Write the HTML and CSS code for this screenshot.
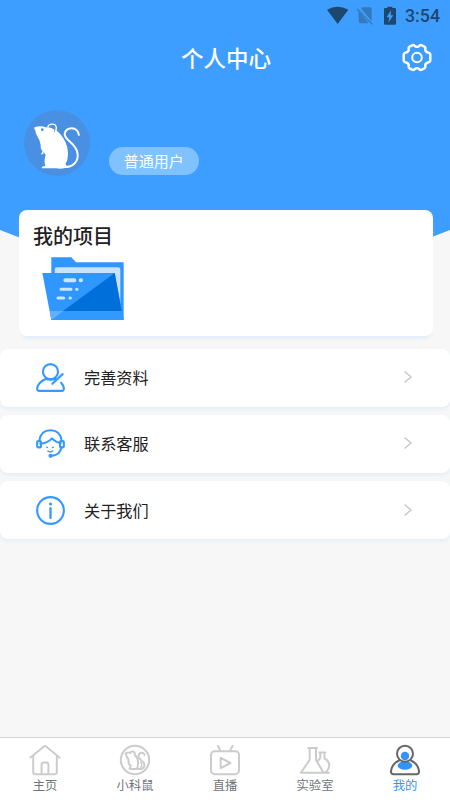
FILE: index.html
```html
<!DOCTYPE html>
<html lang="zh-CN">
<head>
<meta charset="utf-8">
<title>个人中心</title>
<link rel="stylesheet" href="styles.css">
</head>
<body>
<div class="app">
  <header class="hero">
    <div class="status">
      <svg width="108" height="20" viewBox="0 0 324 60">
        <path d="M3 11Q34-7 67 11L35 54Z" fill="#1e4770"/>
        <path d="M105 7L137 46V9Q137 4 132 4H111ZM98 15V45Q98 52 103 52H128Z" fill="#3279bd"/>
        <path d="M93 9L139 55" stroke="#3279bd" stroke-width="4"/>
        <path d="M176 6H184V2H199V6H207Q210 6 210 9V53Q210 56 207 56H177Q174 56 174 53V9Q174 6 177 6Z" fill="#1e4770"/>
        <path d="M195 13L182 34H190L187 50L202 28H194Z" fill="#3e9eff"/>
      </svg>
      <span class="clock">3:54</span>
    </div>
    <div class="titlebar">
      <h1>个人中心</h1>
      <svg class="gear" width="30" height="30" viewBox="0 0 30 30" fill="none" stroke="#fff" stroke-width="2.4" stroke-linejoin="round">
        <path d="M10.7 2.2C11.7 1.5 12.5 2.4 13.1 3.2Q15 4.5 16.9 3.2C17.5 2.4 18.3 1.5 19.3 2.2L22.5 3.7C23.8 4.3 23.4 5.5 23.2 6.4Q23.4 9 26 9.5C27.2 9.7 28.1 9.9 28.3 11.2V17.8C28.1 19.1 27.2 19.3 26 19.5Q23.4 20 23.2 22.6C23.4 23.6 23.8 24.7 22.5 25.3L19.3 26.8C18.3 27.5 17.5 26.6 16.9 25.8Q15 24.5 13.1 25.8C12.5 26.6 11.7 27.5 10.7 26.8L7.5 25.3C6.2 24.7 6.6 23.6 6.8 22.6Q6.6 20 4 19.5C2.8 19.3 1.9 19.1 1.7 17.8V11.2C1.9 9.9 2.8 9.7 4 9.5Q6.6 9 6.8 6.4C6.6 5.5 6.2 4.3 7.5 3.7Z"/>
        <circle cx="15" cy="14.5" r="4.8" stroke-width="2"/>
      </svg>
    </div>
    <div class="profile">
      <svg width="66" height="66" viewBox="27 30 198 198">
        <circle cx="126" cy="129" r="99" fill="#4a90e2"/>
        <path d="M58 82Q77 76 92 82Q116 82 133 99Q157 124 159 158Q159 182 151 191L158 202Q143 208 123 205H80Q80 198 91 198Q86 183 92 165L86 156Q86 165 78 163L83 153Q76 148 77 135Q76 121 66 107Q61 99 61 91Q57 89 58 82Z" fill="#fff"/>
        <path d="M98 82C101 70 121 69 124 81Q125 92 118 98" fill="none" stroke="#fff" stroke-width="4"/>
        <path d="M112 83Q123 88 118 97" fill="none" stroke="#4a90e2" stroke-width="2"/>
        <path d="M147 201C174 202 190 184 188 163C186 130 149 123 149 102C151 79 190 77 192 107" fill="none" stroke="#fff" stroke-width="6"/>
        <circle cx="82" cy="89" r="4" fill="#4a90e2"/>
      </svg>
      <span class="badge">普通用户</span>
    </div>
  </header>

  <main>
    <section class="projects">
      <h2>我的项目</h2>
      <svg width="82" height="64" viewBox="127 171 246 192">
        <path d="M155 172H215L229 187H372V360H155Z" fill="#2f97ff"/>
        <path d="M165 219V209Q165 202 172 202H354Q362 202 362 209V325L345 219Z" fill="#c8e2ff"/>
        <path d="M128 219H345L372 360H155Z" fill="#2f97ff"/>
        <path d="M345 219L366 333H190Z" fill="#006fda"/>
        <path d="M190 333H367L372 360H155Z" fill="#329aff"/>
        <path d="M150 333H191L155 360Z" fill="#62b0ff"/>
        <g stroke="#c8e8ff" stroke-linecap="round">
          <path d="M197 241H224M243 241H244" stroke-width="12"/>
          <path d="M184 268H214M231 268H232" stroke-width="9"/>
          <path d="M175 294H192M211 294H212" stroke-width="9"/>
        </g>
      </svg>
    </section>
    <nav class="menu">
      <a class="row">
        <svg class="icon" viewBox="0 0 30 30">
          <circle cx="15" cy="9" r="7.8"/>
          <path d="M10 16.5Q2 20 1.2 26Q1 28.9 3.5 28.9H26.5Q29 28.9 28.8 26Q28.3 23 26 20.5M10 16.5Q15 18 20 16.5M27.5 11.5L17 21.5"/>
        </svg>
        <span>完善资料</span>
        <svg class="chevron" viewBox="0 0 10 14"><path d="M1.5 1.5L8 7L1.5 12.5"/></svg>
      </a>
      <a class="row">
        <svg class="icon" viewBox="0 0 30 30">
          <path d="M3.5 12C4.5 5 9 1.3 15 1.3S25.5 5 26.5 12M4.5 15.2C9.5 15 13.5 13 16.5 9.7Q20 13.5 25.5 14.5M26.3 19C25.5 24.5 21 27.5 15.5 27.8"/>
          <rect x="1.2" y="12.5" width="4" height="6.5" rx="1.2"/>
          <rect x="24.8" y="12.5" width="4" height="6.5" rx="1.2"/>
          <path d="M12.3 22.8Q14.8 24.8 17.3 22.8" stroke-width="1.5"/>
          <g fill="#3699ff" stroke="none"><circle cx="11.5" cy="19" r="1"/><circle cx="17.5" cy="19" r="1"/><circle cx="15" cy="27.8" r="2.1"/></g>
        </svg>
        <span>联系客服</span>
        <svg class="chevron" viewBox="0 0 10 14"><path d="M1.5 1.5L8 7L1.5 12.5"/></svg>
      </a>
      <a class="row">
        <svg class="icon" viewBox="0 0 30 30">
          <circle cx="15" cy="15" r="13.8"/>
          <path d="M15 12.5V22.8" stroke-width="2.4"/>
          <circle cx="15" cy="8.3" r="1.6" fill="#3699ff" stroke="none"/>
        </svg>
        <span>关于我们</span>
        <svg class="chevron" viewBox="0 0 10 14"><path d="M1.5 1.5L8 7L1.5 12.5"/></svg>
      </a>
    </nav>
  </main>

  <footer class="tabs">
    <a class="tab">
      <svg viewBox="0 0 32 32"><path d="M1.5 13.5L15.2 2.3Q16 1.7 16.8 2.3L30.5 13.5M4.2 12V28Q4.2 30.2 6.5 30.2H25.5Q27.8 30.2 27.8 28V12M12.6 30V20.5Q12.6 18.6 14.4 18.6H17.6Q19.4 18.6 19.4 20.5V30"/></svg>
      <span>主页</span>
    </a>
    <a class="tab">
      <svg viewBox="0 0 32 32">
        <circle cx="16" cy="16" r="14.2"/>
        <path d="M6.5 9.5Q9 8 11.5 9C12 6.5 16.5 7 15.7 10.5Q19 14 19.2 19Q19.2 22 17.8 25H10.5L11.8 21.5L9.8 20Q10 15 7.5 12ZM19.5 25C26 25.5 27 20 23 17C19 14.5 18.5 10 21.8 9Q24.8 8.2 25.5 11"/>
        <path d="M21.5 23.5Q24 21 21.5 18" stroke-width="1.3"/>
      </svg>
      <span>小科鼠</span>
    </a>
    <a class="tab">
      <svg viewBox="0 0 32 32"><rect x="2" y="7.2" width="28" height="23" rx="3.7"/><path d="M9 2L11.5 7M23.5 2L21 7M11.7 13.8V24.2L21.4 19Z"/></svg>
      <span>直播</span>
    </a>
    <a class="tab">
      <svg viewBox="0 0 32 32"><path d="M9.2 4H18M10.7 4V16L1.8 28.8H24.5L17 16V4M20.3 8.5H26.3M21.3 8.5V14L18.7 17M25.5 8.5V14.3Q30.5 17 30.2 21.5Q29.8 26.5 25.5 28.8H30"/></svg>
      <span>实验室</span>
    </a>
    <a class="tab active">
      <svg viewBox="0 0 32 32">
        <circle cx="16" cy="12" r="4.2" fill="#3095f7" stroke="none"/>
        <ellipse cx="16" cy="21.5" rx="7.3" ry="4.3" fill="#3095f7" stroke="none"/>
        <circle cx="16" cy="9.7" r="8"/>
        <path d="M10 16.5C5 19 2.5 23 2 27Q1.8 30.2 4.5 30.2H27.5Q30.2 30.2 30 27C29.5 23 27 19 22 16.5"/>
      </svg>
      <span>我的</span>
    </a>
  </footer>
</div>
</body>
</html>
```
FILE: styles.css
```css
* { box-sizing: border-box; }

body {
  margin: 0;
  font-family: "Noto Sans CJK SC", sans-serif;
  color: #222;
}

svg { display: block; flex: none; }

.app {
  height: 800px;
  display: flex;
  flex-direction: column;
  background: #f7f7f7;
  overflow: hidden;
}

.hero {
  height: 288px;
  margin-bottom: -78px;
  flex: none;
  background: #3e9eff;
  clip-path: polygon(0 0, 100% 0, 100% 230px, 300px 288px, 150px 288px, 0 230px);
}

.status {
  height: 30px;
  padding: 1px 10px 0 0;
  display: flex;
  justify-content: flex-end;
  align-items: center;
}

.status svg { margin-right: -29.5px; }

.clock {
  font: 500 17.8px/30px Roboto, sans-serif;
  color: #1e4770;
}

.titlebar {
  height: 56px;
  display: grid;
  grid-template-columns: 1fr auto 1fr;
  align-items: center;
  padding-right: 18px;
  padding-left: 20px;
}

h1 {
  grid-column: 2;
  margin: 0 0 2px;
  font-size: 22.5px;
  line-height: 32px;
  font-weight: 500;
  color: #fff;
}

.gear { justify-self: end; }

.profile {
  display: flex;
  align-items: flex-end;
  gap: 18.5px;
  padding: 24px 24px 0;
}

.badge {
  width: 90.5px;
  height: 28px;
  margin-bottom: 1px;
  border-radius: 14px;
  background: #80c2ff;
  color: #fff;
  font-size: 15px;
  line-height: 28px;
  text-align: center;
}

main {
  position: relative;
  flex: 1;
}

.projects {
  height: 126px;
  margin: 0 17.5px 13px 18.5px;
  padding: 11px 14.5px;
  border-radius: 8px;
  background: #fff;
  box-shadow: 0 5px 4px -3px #dcebf8;
}

h2 {
  margin: 0;
  font-size: 20px;
  line-height: 30px;
  font-weight: 500;
}

.projects svg { margin: 6px 0 0 9px; }

.menu {
  display: grid;
  gap: 8.7px;
}

.row {
  height: 57.5px;
  padding: 0 37px 0 36px;
  display: flex;
  align-items: center;
  border-radius: 8px;
  background: #fff;
  box-shadow: 0 2px 4px #e1edf8;
  font-size: 16.2px;
}

.row span { margin: 0 0 1px 19px; flex: 1; }

.icon {
  width: 29px;
  height: 29px;
  fill: none;
  stroke: #3699ff;
  stroke-width: 2.2;
  stroke-linecap: round;
  stroke-linejoin: round;
}

.chevron {
  width: 10px;
  height: 14px;
  margin-bottom: 1px;
  fill: none;
  stroke: #c8c8c8;
  stroke-width: 1.5;
}

.tabs {
  height: 63px;
  flex: none;
  display: grid;
  grid-template-columns: repeat(5, 1fr);
  border-top: 1px solid #d4d4d4;
  background: #fff;
}

.tab {
  display: flex;
  flex-direction: column;
  align-items: center;
  padding-top: 5.5px;
  font-size: 12.3px;
  line-height: 19px;
  color: #6f747b;
}

.tab svg {
  width: 32px;
  height: 32px;
  fill: none;
  stroke: #ccc;
  stroke-width: 2;
  stroke-linejoin: round;
  stroke-linecap: round;
}

.active { color: #3095f7; }
.active svg { stroke: #666; }
```
